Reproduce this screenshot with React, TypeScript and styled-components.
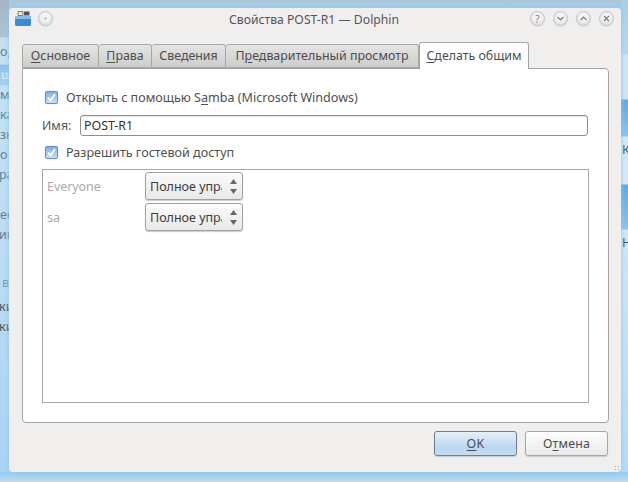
import React from "react";
import styled, { createGlobalStyle } from "styled-components";

const Global = createGlobalStyle`
  html, body { margin: 0; padding: 0; width: 628px; height: 482px; overflow: hidden; }
  * { box-sizing: border-box; }
  #root { width: 628px; height: 482px; }
`;

const Desktop = styled.div`
  position: relative;
  width: 628px;
  height: 482px;
  padding: 8px 7px 10px 9px;
  overflow: hidden;
  background: #a6cfeb;
  font-family: "Noto Sans", sans-serif;
  font-size: 12.4px;
  color: #4a4a4a;
`;

const TopBand = styled.div`
  position: absolute;
  left: 0;
  top: 0;
  right: 0;
  height: 10px;
  background: linear-gradient(180deg, #a9c6da, #a8cfe9);
`;

const BottomBand = styled.div`
  position: absolute;
  left: 0;
  bottom: 0;
  right: 0;
  height: 10px;
  background: linear-gradient(180deg, #8fcdf5, #c6d9e6);
`;

const LeftStrip = styled.div`
  position: absolute;
  left: 0;
  top: 0;
  width: 9px;
  height: 472px;
  background: linear-gradient(
    180deg,
    #a2b6c4 0,
    #a9c4d8 37px,
    #c6dff0 38px,
    #c6dff0 64px,
    #8cc3ec 65px,
    #a5d2f2 85px,
    #c4e0f3 86px,
    #bcdcf3 250px,
    #a8d4f3 472px
  );
`;

const RightStrip = styled.div`
  position: absolute;
  right: 0;
  top: 0;
  width: 7px;
  height: 472px;
  background: linear-gradient(
    180deg,
    #a8cde6 0,
    #b6d8ef 54px,
    #cce3f3 55px,
    #cce3f3 99px,
    #5fa9e0 100px,
    #8cc4ec 136px,
    #d3e8f7 137px,
    #d3e8f7 184px,
    #5fa9e0 185px,
    #8cc4ec 229px,
    #cfe6f7 230px,
    #b4dbf6 472px
  );
`;

const BehindText = styled.span<{ $x: number; $y: number; $c?: string }>`
  position: absolute;
  left: ${(p) => p.$x}px;
  top: ${(p) => p.$y}px;
  font-size: 12.5px;
  line-height: 14px;
  color: ${(p) => p.$c ?? "#5f7f94"};
`;

const Win = styled.div`
  position: relative;
  width: 612px;
  height: 464px;
  background: #f0efee;
  border-radius: 4px;
  padding: 0 13px;
  box-shadow: 0 0 4px #85c8f6;
  display: flex;
  flex-direction: column;
`;

const TitleBar = styled.div`
  height: 34px;
  margin: 0 -13px;
  padding: 0 7px 13px 6px;
  display: flex;
  align-items: center;
`;

const AppIcon = styled.svg`
  width: 16px;
  height: 15px;
  flex: none;
`;

const Round = styled.div<{ $l?: number }>`
  width: 15px;
  height: 15px;
  border-radius: 50%;
  margin-left: ${(p) => p.$l ?? 0}px;
  background: radial-gradient(circle at 50% 40%, #f4f4f4 35%, #d2d2d2 100%);
  border: 1px solid #c4c4c4;
  box-shadow: 0 1px 1px #dedede;
  display: flex;
  align-items: center;
  justify-content: center;
  flex: none;
  color: #7a7a7a;
`;

const HelpMark = styled.span`
  font-size: 10px;
  line-height: 10px;
`;

const Title = styled.div`
  flex: 1;
  text-align: center;
  font-size: 12.2px;
  color: #555;
  padding-left: 45px;
  margin-top: 2px;
`;

const TabRow = styled.div`
  display: flex;
  align-items: flex-end;
  height: 26px;
  position: relative;
  z-index: 1;
`;

const Tab = styled.div<{ $w: number; $active?: boolean }>`
  width: ${(p) => p.$w}px;
  height: ${(p) => (p.$active ? 27 : 24)}px;
  margin-bottom: ${(p) => (p.$active ? -1 : 0)}px;
  flex: none;
  border: 1px solid #a6a6a6;
  border-left-width: ${(p) => (p.$active ? 1 : 0)}px;
  border-bottom: ${(p) => (p.$active ? "none" : "1px solid #a6a6a6")};
  border-radius: 3px 3px 0 0;
  background: ${(p) =>
    p.$active ? "#fff" : "linear-gradient(180deg, #e4e4e3, #cdcdcc)"};
  text-align: center;
  line-height: ${(p) => (p.$active ? 25 : 22)}px;
  font-size: 12.4px;
  white-space: nowrap;
  color: #4d4d4d;
  &:first-child { border-left-width: 1px; }
`;

const U = styled.span`
  text-decoration: underline;
  text-underline-offset: 2px;
  text-decoration-thickness: 1px;
`;

const Pane = styled.div`
  width: 587px;
  height: 355px;
  background: #fff;
  border: 1px solid #a3a3a3;
  border-radius: 0 4px 4px 4px;
  padding: 13px 19px 18px 19px;
  display: flex;
  flex-direction: column;
`;

const CheckRow = styled.label<{ $gapTop?: number }>`
  display: flex;
  align-items: center;
  gap: 8px;
  height: 30px;
  margin-top: ${(p) => p.$gapTop ?? 0}px;
  padding-left: 3px;
  font-size: 12.55px;
  color: #4f4f4f;
`;

const CheckBox = styled.span`
  width: 13px;
  height: 13px;
  flex: none;
  border-radius: 2px;
  border: 1px solid #6f8fb4;
  background: linear-gradient(180deg, #7fb0e4, #c6ddf5);
  box-shadow: 0 0 1px #999;
  display: flex;
  align-items: center;
  justify-content: center;
`;

const NameRow = styled.div`
  display: flex;
  align-items: center;
  height: 21px;
  margin-top: 3px;
  color: #555;
`;

const NameLabel = styled.span`
  width: 38px;
  flex: none;
`;

const NameInput = styled.div`
  width: 508px;
  height: 21px;
  border: 1px solid #8e8e8e;
  border-radius: 3px;
  padding-left: 3px;
  line-height: 19px;
  color: #333;
  box-shadow: inset 0 1px 1px #e6e6e6;
`;

const UserList = styled.div`
  width: 547px;
  height: 234px;
  margin-top: 2px;
  border: 1px solid #a9a9a9;
  padding: 2px 0 0 4px;
  display: flex;
  flex-direction: column;
  gap: 3px;
`;

const UserRow = styled.div`
  display: flex;
  align-items: center;
  height: 28px;
  color: #a8a8a8;
`;

const UserName = styled.span`
  width: 98px;
  flex: none;
`;

const Spin = styled.div`
  width: 98px;
  height: 28px;
  border: 1px solid #a0a0a0;
  border-radius: 3px;
  background: linear-gradient(180deg, #fbfbfb, #e8e8e8);
  padding-left: 4px;
  display: flex;
  align-items: center;
  color: #3c3c3c;
  font-size: 12.5px;
  box-shadow: 0 1px 1px #ccc;
`;

const SpinLabel = styled.span`
  width: 72px;
  overflow: hidden;
  white-space: nowrap;
`;

const SpinArrows = styled.svg`
  width: 7px;
  height: 15px;
  margin-left: 8px;
  flex: none;
`;

const Footer = styled.div`
  display: flex;
  justify-content: flex-end;
  gap: 8px;
  padding-top: 8px;
`;

const Btn = styled.div<{ $primary?: boolean }>`
  width: 83px;
  height: 25px;
  border: 1px solid ${(p) => (p.$primary ? "#6d7f91" : "#a6a6a6")};
  border-radius: 3px;
  background: ${(p) =>
    p.$primary
      ? "linear-gradient(180deg, #e6f0f9, #b9d6f0 70%, #c7def3)"
      : "linear-gradient(180deg, #fdfdfd, #e9e9e9)"};
  text-align: center;
  line-height: 23px;
  color: #4d4d4d;
  letter-spacing: 0.2px;
  box-shadow: 0 1px 1px #ccc;
`;

const Grip = styled.div`
  position: absolute;
  right: 1px;
  bottom: 1px;
  width: 6px;
  height: 6px;
  background: radial-gradient(circle, #aaa 1px, transparent 1px) 0 0 / 3px 3px;
`;

const Check = () => (
  <svg width="11" height="11" viewBox="0 0 11 11">
    <path d="M2 5.5 L4.6 8.5 L9 2" fill="none" stroke="#fff" strokeWidth="1.8" />
  </svg>
);

const Arrows = () => (
  <SpinArrows viewBox="0 0 7 15">
    <path d="M3.5 0 L7 5 H0 Z M3.5 15 L0 10 H7 Z" fill="#666" />
  </SpinArrows>
);

const Glyph = ({ d }: { d: string }) => (
  <svg width="9" height="9" viewBox="0 0 9 9">
    <path d={d} fill="none" stroke="#7a7a7a" strokeWidth="1.1" />
  </svg>
);

const behind: [string, number, number, string?][] = [
  ["о,", 0, 45],
  ["ш", 1, 68, "#dcecf7"],
  ["ме", 0, 88],
  ["ка", 0, 108],
  ["зк", 0, 128],
  ["о", 0, 148],
  ["ра", -1, 168],
  ["ее", 0, 208],
  ["ин", -1, 228],
  ["в", 2, 276, "#7d97a8"],
  ["ки", -1, 300, "#3f5566"],
  ["ки", -1, 320, "#3f5566"],
  ["К", 622, 143, "#3f5566"],
  ["Н", 622, 236, "#3f5566"],
];

export default function App() {
  return (
    <Desktop>
      <Global />
      <TopBand />
      <BottomBand />
      <LeftStrip />
      <RightStrip />
      {behind.map(([t, x, y, c], i) => (
        <BehindText key={i} $x={x} $y={y} $c={c}>
          {t}
        </BehindText>
      ))}
      <Win>
        <TitleBar>
          <AppIcon viewBox="0 0 16 15">
            <path d="M3 0.5h5v4H3z" fill="#f2e8be" stroke="#55554a" strokeWidth="0.7" />
            <path d="M9 0.5h5.5v4H9z" fill="#4e5258" />
            <path d="M0 5h16v8.5A1.5 1.5 0 0 1 14.5 15h-13A1.5 1.5 0 0 1 0 13.5z" fill="#3c8ad2" />
            <path d="M0 5h16v3H0z" fill="#7fbdf0" />
          </AppIcon>
          <Round $l={7}>
            <svg width="5" height="5" viewBox="0 0 5 5">
              <circle cx="2.5" cy="2.5" r="1.2" fill="#bbb" />
            </svg>
          </Round>
          <Title>Свойства POST-R1 — Dolphin</Title>
          <Round>
            <HelpMark>?</HelpMark>
          </Round>
          <Round $l={8}>
            <Glyph d="M1.5 3 L4.5 6 L7.5 3" />
          </Round>
          <Round $l={8}>
            <Glyph d="M1.5 6 L4.5 3 L7.5 6" />
          </Round>
          <Round $l={8}>
            <Glyph d="M2 2 L7 7 M7 2 L2 7" />
          </Round>
        </TitleBar>
        <TabRow>
          <Tab $w={77}>
            <U>О</U>сновное
          </Tab>
          <Tab $w={53}>
            <U>П</U>рава
          </Tab>
          <Tab $w={74}>Сведения</Tab>
          <Tab $w={193}>
            П<U>р</U>едварительный просмотр
          </Tab>
          <Tab $w={110} $active>
            <U>С</U>делать общим
          </Tab>
        </TabRow>
        <Pane>
          <CheckRow>
            <CheckBox>
              <Check />
            </CheckBox>
            <span>
              Открыть с помощью S<U>a</U>mba (Microsoft Windows)
            </span>
          </CheckRow>
          <NameRow>
            <NameLabel>Имя:</NameLabel>
            <NameInput>POST-R1</NameInput>
          </NameRow>
          <CheckRow $gapTop={1}>
            <CheckBox>
              <Check />
            </CheckBox>
            <span>Разрешить гостевой доступ</span>
          </CheckRow>
          <UserList>
            <UserRow>
              <UserName>Everyone</UserName>
              <Spin>
                <SpinLabel>Полное управление</SpinLabel>
                <Arrows />
              </Spin>
            </UserRow>
            <UserRow>
              <UserName>sa</UserName>
              <Spin>
                <SpinLabel>Полное управление</SpinLabel>
                <Arrows />
              </Spin>
            </UserRow>
          </UserList>
        </Pane>
        <Footer>
          <Btn $primary>
            <U>O</U>K
          </Btn>
          <Btn>
            О<U>т</U>мена
          </Btn>
        </Footer>
        <Grip />
      </Win>
    </Desktop>
  );
}
